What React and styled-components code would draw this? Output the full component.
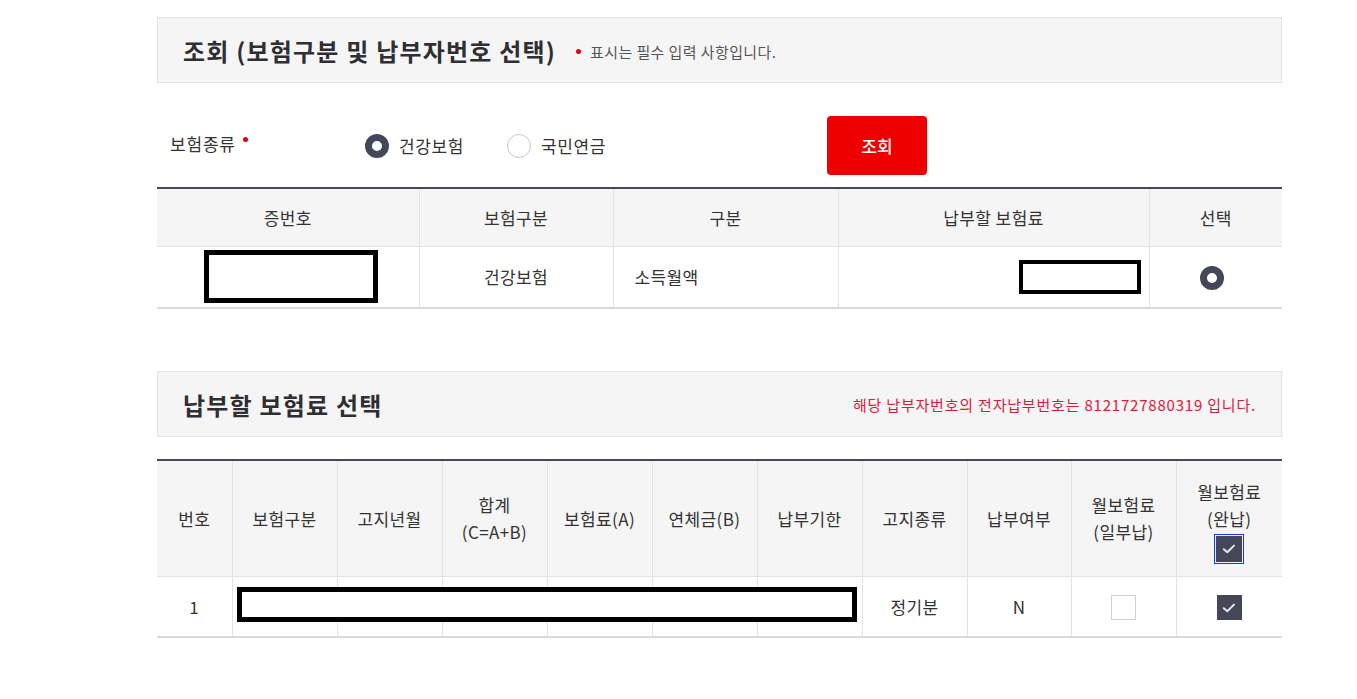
import React from "react";
import styled, { createGlobalStyle } from "styled-components";

const Global = createGlobalStyle`
  html, body { margin: 0; padding: 0; background: #fff; }
  body { font-family: "Noto Sans CJK KR", "Noto Sans", sans-serif; color: #333; }
  * { box-sizing: border-box; }
`;

const Page = styled.div`
  width: 1125px;
  margin-left: 157px;
  padding-top: 17px;
  padding-bottom: 60px;
`;

const TitleBox = styled.div`
  height: 66px;
  border: 1px solid #e3e3e3;
  background: #f5f5f5;
  display: flex;
  align-items: center;
  justify-content: space-between;
  padding: 0 25px 0 25px;
  margin-top: ${(p) => p.$mt || 0}px;
`;

const TitleLeft = styled.div`
  display: flex;
  align-items: center;
  gap: 20px;
`;

const Title = styled.h2`
  margin: 0;
  font-size: 24px;
  font-weight: 700;
  color: #2e2e33;
  letter-spacing: 1.2px;
`;

const Note = styled.span`
  font-size: 15px;
  color: #555;
  display: flex;
  align-items: center;
  gap: 9px;
  letter-spacing: 0.4px;
  margin-top: 2px;
`;

const Dot = styled.span`
  width: 5px;
  height: 5px;
  border-radius: 50%;
  background: #e60012;
  display: inline-block;
  margin-top: ${(p) => (p.$raise ? "-8px" : "0")};
`;

const RedNote = styled.span`
  font-size: 15px;
  color: #e2183a;
  letter-spacing: 0.8px;
`;

const FormRow = styled.div`
  display: flex;
  align-items: center;
  padding: 33px 0 12px 13px;
`;

const Label = styled.div`
  width: 195px;
  font-size: 17px;
  color: #333;
  display: flex;
  align-items: center;
  gap: 7px;
  margin-top: -4px;
  letter-spacing: 0.8px;
`;

const RadioGroup = styled.div`
  display: flex;
  align-items: center;
  gap: 43px;
  width: 462px;
`;

const RadioItem = styled.label`
  display: flex;
  align-items: center;
  gap: 10px;
  font-size: 17px;
  color: #333;
  letter-spacing: 0.6px;
`;

const RadioCircle = styled.span`
  width: 24px;
  height: 24px;
  border-radius: 50%;
  display: inline-block;
  background: #fff;
  border: ${(p) => (p.$on ? "7px solid #444759" : "1px solid #c8c8c8")};
  vertical-align: middle;
  margin-right: ${(p) => p.$mr || 0}px;
`;

const SearchButton = styled.button`
  width: 100px;
  height: 59px;
  border: none;
  border-radius: 4px;
  background: #ee0000;
  color: #fff;
  font-family: inherit;
  font-size: 17px;
  font-weight: 500;
`;

const Table = styled.table`
  width: 1125px;
  border-collapse: collapse;
  table-layout: fixed;
  border-top: 2px solid #454859;
  border-bottom: 2px solid #d9d9dc;
  margin-top: ${(p) => p.$mt || 0}px;
`;

const Th = styled.th`
  background: #f5f5f5;
  font-weight: 400;
  font-size: 17px;
  letter-spacing: 0.4px;
  color: #333;
  height: ${(p) => p.$h}px;
  line-height: 27px;
  border-left: ${(p) => (p.$first ? "none" : "1px solid #e2e2e2")};
  border-bottom: 1px solid #e2e2e2;
  padding: 0;
  vertical-align: middle;
`;

const Td = styled.td`
  font-size: 17px;
  letter-spacing: 0.4px;
  color: #333;
  height: ${(p) => p.$h}px;
  text-align: ${(p) => p.$align || "center"};
  padding: ${(p) => (p.$align === "left" ? "0 0 0 21px" : "0")};
  border-left: ${(p) => (p.$first ? "none" : "1px solid #e2e2e2")};
  vertical-align: middle;
  position: relative;
`;

const Redact = styled.div`
  width: ${(p) => p.$w}px;
  height: ${(p) => p.$h}px;
  border: ${(p) => p.$b}px solid #000;
  background: #fff;
  margin: ${(p) => p.$m || "0 auto"};
`;

const Overlay = styled.div`
  position: absolute;
  left: ${(p) => p.$l}px;
  top: ${(p) => p.$t}px;
  width: ${(p) => p.$w}px;
  height: ${(p) => p.$h}px;
  border: 5px solid #000;
  background: #fff;
  z-index: 2;
`;

const Check = styled.span`
  display: inline-flex;
  align-items: center;
  justify-content: center;
  width: ${(p) => p.$s}px;
  height: ${(p) => p.$s}px;
  background: ${(p) => (p.$on ? "#454759" : "#fff")};
  border: ${(p) => (p.$on ? "none" : "1px solid #cfcfcf")};
  outline: ${(p) => (p.$focus ? "1px solid #1436ff" : "none")};
  outline-offset: 1px;
  vertical-align: middle;
  svg { display: block; flex: none; }
`;

const Tick = () => (
  <svg width="16" height="16" viewBox="0 0 16 16">
    <path d="M2.8 8.2 L6.3 11.2 L13 4.6" fill="none" stroke="#e6e6ec" strokeWidth="2" strokeLinecap="round" strokeLinejoin="round" />
  </svg>
);

const HeadStack = styled.div`
  display: flex;
  flex-direction: column;
  align-items: center;
  padding-top: 4px;
`;

export default function App() {
  const cols1 = [262, 194, 225, 311, 133];
  const cols2 = [75, 105, 105, 105, 105, 105, 105, 105, 104, 105, 106];
  return (
    <>
      <Global />
      <Page>
        <TitleBox>
          <TitleLeft>
            <Title>조회 (보험구분 및 납부자번호 선택)</Title>
            <Note>
              <Dot />
              표시는 필수 입력 사항입니다.
            </Note>
          </TitleLeft>
        </TitleBox>

        <FormRow>
          <Label>
            보험종류 <Dot $raise />
          </Label>
          <RadioGroup>
            <RadioItem>
              <RadioCircle $on />
              건강보험
            </RadioItem>
            <RadioItem>
              <RadioCircle />
              국민연금
            </RadioItem>
          </RadioGroup>
          <SearchButton>조회</SearchButton>
        </FormRow>

        <Table>
          <colgroup>
            {cols1.map((w, i) => (
              <col key={i} style={{ width: w }} />
            ))}
          </colgroup>
          <thead>
            <tr>
              <Th $h={58} $first>증번호</Th>
              <Th $h={58}>보험구분</Th>
              <Th $h={58}>구분</Th>
              <Th $h={58}>납부할 보험료</Th>
              <Th $h={58}>선택</Th>
            </tr>
          </thead>
          <tbody>
            <tr>
              <Td $h={62} $first>
                <Redact $w={174} $h={53} $b={5} $m="0 0 0 47px" />
              </Td>
              <Td $h={62}>건강보험</Td>
              <Td $h={62} $align="left">소득월액</Td>
              <Td $h={62}>
                <Redact $w={122} $h={34} $b={4} $m="0 0 0 180px" />
              </Td>
              <Td $h={62}>
                <RadioCircle $on $mr={8} />
              </Td>
            </tr>
          </tbody>
        </Table>

        <TitleBox $mt={62}>
          <Title>납부할 보험료 선택</Title>
          <RedNote>해당 납부자번호의 전자납부번호는 8121727880319 입니다.</RedNote>
        </TitleBox>

        <Table $mt={22}>
          <colgroup>
            {cols2.map((w, i) => (
              <col key={i} style={{ width: w }} />
            ))}
          </colgroup>
          <thead>
            <tr>
              <Th $h={116} $first>번호</Th>
              <Th $h={116}>보험구분</Th>
              <Th $h={116}>고지년월</Th>
              <Th $h={116}>
                합계
                <br />
                (C=A+B)
              </Th>
              <Th $h={116}>보험료(A)</Th>
              <Th $h={116}>연체금(B)</Th>
              <Th $h={116}>납부기한</Th>
              <Th $h={116}>고지종류</Th>
              <Th $h={116}>납부여부</Th>
              <Th $h={116}>
                월보험료
                <br />
                (일부납)
              </Th>
              <Th $h={116}>
                <HeadStack>
                  <span>월보험료</span>
                  <span>(완납)</span>
                  <Check $on $focus $s={26} style={{ marginTop: 4 }}>
                    <Tick />
                  </Check>
                </HeadStack>
              </Th>
            </tr>
          </thead>
          <tbody>
            <tr>
              <Td $h={61} $first>1</Td>
              <Td $h={61}>
                <Overlay $l={4} $t={10} $w={620} $h={35} />
              </Td>
              <Td $h={61} />
              <Td $h={61} />
              <Td $h={61} />
              <Td $h={61} />
              <Td $h={61} />
              <Td $h={61}>정기분</Td>
              <Td $h={61}>N</Td>
              <Td $h={61}>
                <Check $s={25} />
              </Td>
              <Td $h={61}>
                <Check $on $s={25}>
                  <Tick />
                </Check>
              </Td>
            </tr>
          </tbody>
        </Table>
      </Page>
    </>
  );
}
